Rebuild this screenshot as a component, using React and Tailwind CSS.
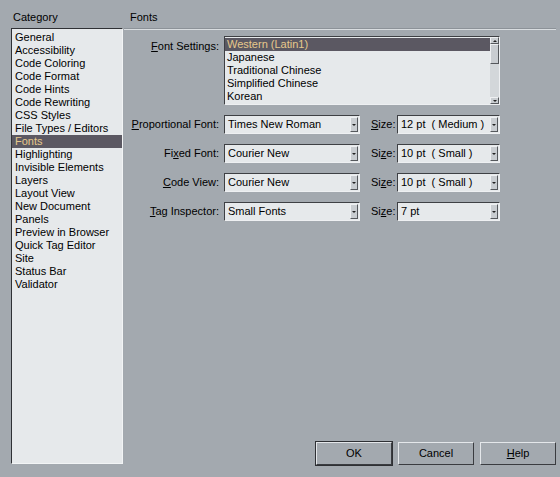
const categories = [
  "General",
  "Accessibility",
  "Code Coloring",
  "Code Format",
  "Code Hints",
  "Code Rewriting",
  "CSS Styles",
  "File Types / Editors",
  "Fonts",
  "Highlighting",
  "Invisible Elements",
  "Layers",
  "Layout View",
  "New Document",
  "Panels",
  "Preview in Browser",
  "Quick Tag Editor",
  "Site",
  "Status Bar",
  "Validator",
];

const encodings = ["Western (Latin1)", "Japanese", "Traditional Chinese", "Simplified Chinese", "Korean"];

const rows = [
  { pre: "", key: "P", post: "roportional Font:", font: "Times New Roman", sPre: "", sKey: "S", sPost: "ize:", size: "12 pt  ( Medium )" },
  { pre: "Fi", key: "x", post: "ed Font:", font: "Courier New", sPre: "Si", sKey: "z", sPost: "e:", size: "10 pt  ( Small )" },
  { pre: "", key: "C", post: "ode View:", font: "Courier New", sPre: "Si", sKey: "z", sPost: "e:", size: "10 pt  ( Small )" },
  { pre: "", key: "T", post: "ag Inspector:", font: "Small Fonts", sPre: "Si", sKey: "z", sPost: "e:", size: "7 pt" },
];

// small grey button with a down arrow, sits at the right edge of a combo box
function DropArrow() {
  return (
    <div className="w-[8px] h-full flex items-center justify-center bg-[#c9cdd1] border-l border-t border-l-[#eef0f2] border-t-[#eef0f2] border-r border-b border-r-[#55585c] border-b-[#55585c]">
      <span className="block w-0 h-0 border-l-[2px] border-r-[2px] border-t-[2px] border-l-transparent border-r-transparent border-t-[#222]" />
    </div>
  );
}

function Combo({ value, width }) {
  return (
    <div className={`${width} h-[19px] flex items-stretch bg-[#e6e9eb] border border-t-[#3e4044] border-l-[#3e4044] border-b-[#eef0f2] border-r-[#eef0f2] p-px`}>
      <div className="flex-1 pl-[2px] leading-[15px] whitespace-pre">{value}</div>
      <DropArrow />
    </div>
  );
}

function Label({ pre, k, post, className }) {
  return (
    <span className={className}>
      {pre}
      <span className="underline underline-offset-1">{k}</span>
      {post}
    </span>
  );
}

function Btn({ children, primary }) {
  return (
    <button
      className={`h-[23px] w-[76px] bg-[#a3a9af] border border-t-[#e4e7ea] border-l-[#e4e7ea] border-b-[#3a3c40] border-r-[#3a3c40] text-[11px] ${primary ? "outline outline-1 outline-[#2e3034]" : ""}`}
    >
      {children}
    </button>
  );
}

export default function App() {
  return (
    <div
      className="w-[560px] h-[477px] bg-[#a3a9af] text-black text-[11px] flex overflow-hidden"
      style={{ fontFamily: "'Liberation Sans', Arial, sans-serif" }}
    >
      {/* category list */}
      <div className="w-[125px] pl-[11px] pt-[10px] flex flex-col">
        <div className="pl-[2px] h-[18px] leading-[14px]">Category</div>
        <div className="w-[112px] h-[436px] bg-[#e6e9eb] border border-t-[#2f3135] border-l-[#2f3135] border-b-[#f2f4f5] border-r-[#f2f4f5] pt-[2px]">
          {categories.map((c) => (
            <div
              key={c}
              className={`h-[13px] leading-[13px] pl-[3px] whitespace-nowrap ${c === "Fonts" ? "bg-[#5b5862] text-[#e6c88c]" : ""}`}
            >
              {c}
            </div>
          ))}
        </div>
      </div>

      {/* settings panel */}
      <div className="flex-1 flex flex-col pt-[10px] pr-[4px]">
        <div className="pl-[6px] h-[18px] leading-[14px]">Fonts</div>
        <div className="h-px bg-[#d9dde0] border-t border-[#8c9298] box-content" />

        <div className="flex pt-[6px]">
          <div className="w-[100px] text-right pr-[5px] pt-[2px]">
            <Label pre="" k="F" post="ont Settings:" />
          </div>
          <div className="w-[276px] h-[69px] flex bg-[#e6e9eb] border border-t-[#3e4044] border-l-[#3e4044] border-b-[#eef0f2] border-r-[#eef0f2]">
            <div className="flex-1 pt-px">
              {encodings.map((e, i) => (
                <div
                  key={e}
                  className={`h-[13px] leading-[13px] pl-[2px] ${i === 0 ? "bg-[#5b5862] text-[#e6c88c]" : ""}`}
                >
                  {e}
                </div>
              ))}
            </div>
            {/* scrollbar */}
            <div className="w-[9px] flex flex-col bg-[#d3d7da]">
              <div className="h-[7px] bg-[#c9cdd1] border border-t-[#eef0f2] border-l-[#eef0f2] border-b-[#55585c] border-r-[#55585c] flex items-center justify-center">
                <span className="block w-0 h-0 border-l-[2px] border-r-[2px] border-b-[2px] border-l-transparent border-r-transparent border-b-[#222]" />
              </div>
              <div className="h-[20px] bg-[#c9cdd1] border border-t-[#eef0f2] border-l-[#eef0f2] border-b-[#55585c] border-r-[#55585c]" />
              <div className="flex-1" />
              <div className="h-[7px] bg-[#c9cdd1] border border-t-[#eef0f2] border-l-[#eef0f2] border-b-[#55585c] border-r-[#55585c] flex items-center justify-center">
                <span className="block w-0 h-0 border-l-[2px] border-r-[2px] border-t-[2px] border-l-transparent border-r-transparent border-t-[#222]" />
              </div>
            </div>
          </div>
        </div>

        <div className="flex flex-col gap-[10px] pt-[10px]">
          {rows.map((r, i) => (
            <div key={i} className="flex items-center h-[19px]">
              <div className="w-[100px] text-right pr-[5px]">
                <Label pre={r.pre} k={r.key} post={r.post} />
              </div>
              <Combo value={r.font} width="w-[136px]" />
              <div className="w-[37px] pl-[11px]">
                <Label pre={r.sPre} k={r.sKey} post={r.sPost} />
              </div>
              <Combo value={r.size} width="w-[103px]" />
            </div>
          ))}
        </div>

        <div className="mt-auto flex gap-[6px] pb-[12px] pl-[192px]">
          <Btn primary>OK</Btn>
          <Btn>Cancel</Btn>
          <Btn>
            <span className="underline underline-offset-1">H</span>elp
          </Btn>
        </div>
      </div>
    </div>
  );
}
